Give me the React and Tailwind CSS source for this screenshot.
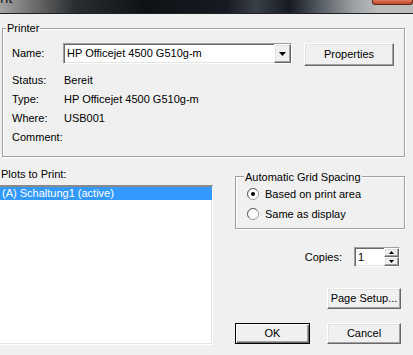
import React from "react";

// classic 3D edges
const raised =
  "border border-t-white border-l-white border-r-[#696969] border-b-[#696969] shadow-[inset_-1px_-1px_0_#a0a0a0,inset_1px_1px_0_#e3e3e3]";
const sunken =
  "border border-t-[#a0a0a0] border-l-[#a0a0a0] border-r-white border-b-white shadow-[inset_1px_1px_0_#696969,inset_-1px_-1px_0_#e3e3e3]";
const etched = "border border-[#a0a0a0] shadow-[inset_1px_1px_0_#fff,1px_1px_0_#fff]";

const Button = ({ children, className = "", isDefault = false }) => (
  <button
    className={
      "flex items-center justify-center bg-[#f0f0f0] text-[11px] leading-[13px] text-black " +
      (isDefault
        ? "border border-black shadow-[inset_1px_1px_0_#fff,inset_-1px_-1px_0_#696969,inset_-2px_-2px_0_#a0a0a0] "
        : raised + " ") +
      className
    }
  >
    {children}
  </button>
);

const Radio = ({ checked }) => (
  <svg width="12" height="12" viewBox="0 0 12 12" className="shrink-0">
    <circle cx="6" cy="6" r="5.5" fill="#fff" stroke="#a0a0a0" />
    <path d="M2.2 9.8 A5 5 0 0 1 2.2 2.2 A5 5 0 0 1 9.8 2.2" fill="none" stroke="#696969" strokeWidth="1" />
    {checked && <circle cx="6" cy="6" r="2" fill="#000" />}
  </svg>
);

const InfoRow = ({ label, value }) => (
  <div className="flex h-[19px] items-center">
    <span className="w-[52px]">{label}</span>
    <span>{value}</span>
  </div>
);

export default function App() {
  return (
    <div
      className="w-[413px] h-[355px] overflow-hidden bg-[#f0f0f0] text-[11px] leading-[13px] text-black"
      style={{ fontFamily: '"Liberation Sans", Arial, sans-serif' }}
    >
      {/* title bar */}
      <div className="flex h-[14px] items-start justify-between overflow-hidden border-b border-[#1e2226] bg-[linear-gradient(90deg,#a4a4a4_0%,#6e6e6e_8%,#2a2e33_18%,#0e1217_35%,#161b21_55%,#3a4047_62%,#141a20_70%,#5a6167_78%,#9fa3a6_86%,#bdbdbd_92%)]">
        <span className="-mt-[10px] pl-[0px] text-[15px] leading-[15px] text-[#1a1a1a]">nt</span>
        <div className="h-[5px] w-[41px] rounded-b-[3px] border border-t-0 border-[#5a2a20] bg-[linear-gradient(180deg,#e07a5c,#c0452a)]" />
      </div>

      {/* Printer group */}
      <fieldset className={"ml-[2px] mt-[8px] w-[403px] " + etched}>
        <legend className="ml-[3px] bg-[#f0f0f0] px-[1px] leading-[13px]">Printer</legend>
        <div className="pl-[9px] pt-[8px] pb-[9px]">
          <div className="flex items-start">
            <span className="mt-[4px] w-[51px]">Name:</span>
            <div className={"flex h-[21px] w-[229px] items-stretch bg-white " + sunken}>
              <span className="flex-1 self-center pl-[3px]">HP Officejet 4500 G510g-m</span>
              <div className={"flex w-[17px] items-center justify-center bg-[#f0f0f0] " + raised}>
                <svg width="7" height="4" viewBox="0 0 7 4">
                  <path d="M0 0h7L3.5 4z" fill="#000" />
                </svg>
              </div>
            </div>
            <Button className="ml-[12px] h-[23px] w-[90px]">Properties</Button>
          </div>
          <div className="mt-[5px] flex flex-col">
            <InfoRow label="Status:" value="Bereit" />
            <InfoRow label="Type:" value="HP Officejet 4500 G510g-m" />
            <InfoRow label="Where:" value="USB001" />
            <InfoRow label="Comment:" value="" />
          </div>
        </div>
      </fieldset>

      <div className="flex">
        {/* plots list */}
        <div className="w-[213px]">
          <div className="mt-[11px] pl-[1px]">Plots to Print:</div>
          <div className="mt-[4px] h-[160px] border-t-2 border-r border-b border-t-[#8a8a8a] border-r-white border-b-white bg-white shadow-[inset_-1px_-1px_0_#e3e3e3]">
            <div className="h-[13px] bg-[#3399ff] pl-[2px] leading-[13px] text-white">(A) Schaltung1 (active)</div>
          </div>
        </div>

        {/* right column */}
        <div className="ml-[22px] w-[170px]">
          <fieldset className={"mt-[11px] " + etched}>
            <legend className="ml-[8px] bg-[#f0f0f0] px-[1px] pt-[3px] leading-[13px]">Automatic Grid Spacing</legend>
            <div className="pl-[11px] pb-[4px]">
              <div className="flex h-[20px] items-center gap-[6px]">
                <Radio checked />
                <span>Based on print area</span>
              </div>
              <div className="flex h-[20px] items-center gap-[6px]">
                <Radio />
                <span>Same as display</span>
              </div>
            </div>
          </fieldset>

          <div className="mt-[18px] flex items-center justify-end pr-[5px]">
            <span>Copies:</span>
            <div className={"ml-[12px] flex h-[20px] w-[46px] items-stretch bg-white " + sunken}>
              <span className="flex-1 self-center pl-[3px]">1</span>
              <div className="flex w-[15px] flex-col">
                <div className={"flex flex-1 items-center justify-center bg-[#f0f0f0] " + raised}>
                  <svg width="5" height="3" viewBox="0 0 5 3">
                    <path d="M2.5 0L5 3H0z" fill="#000" />
                  </svg>
                </div>
                <div className={"flex flex-1 items-center justify-center bg-[#f0f0f0] " + raised}>
                  <svg width="5" height="3" viewBox="0 0 5 3">
                    <path d="M0 0h5L2.5 3z" fill="#000" />
                  </svg>
                </div>
              </div>
            </div>
          </div>

          <div className="mt-[21px] flex justify-end pr-[4px]">
            <Button className="h-[21px] w-[74px]">Page Setup...</Button>
          </div>

          <div className="mt-[14px] flex justify-between pr-[4px]">
            <Button isDefault className="h-[21px] w-[75px]">OK</Button>
            <Button className="h-[21px] w-[74px]">Cancel</Button>
          </div>
        </div>
      </div>
    </div>
  );
}
